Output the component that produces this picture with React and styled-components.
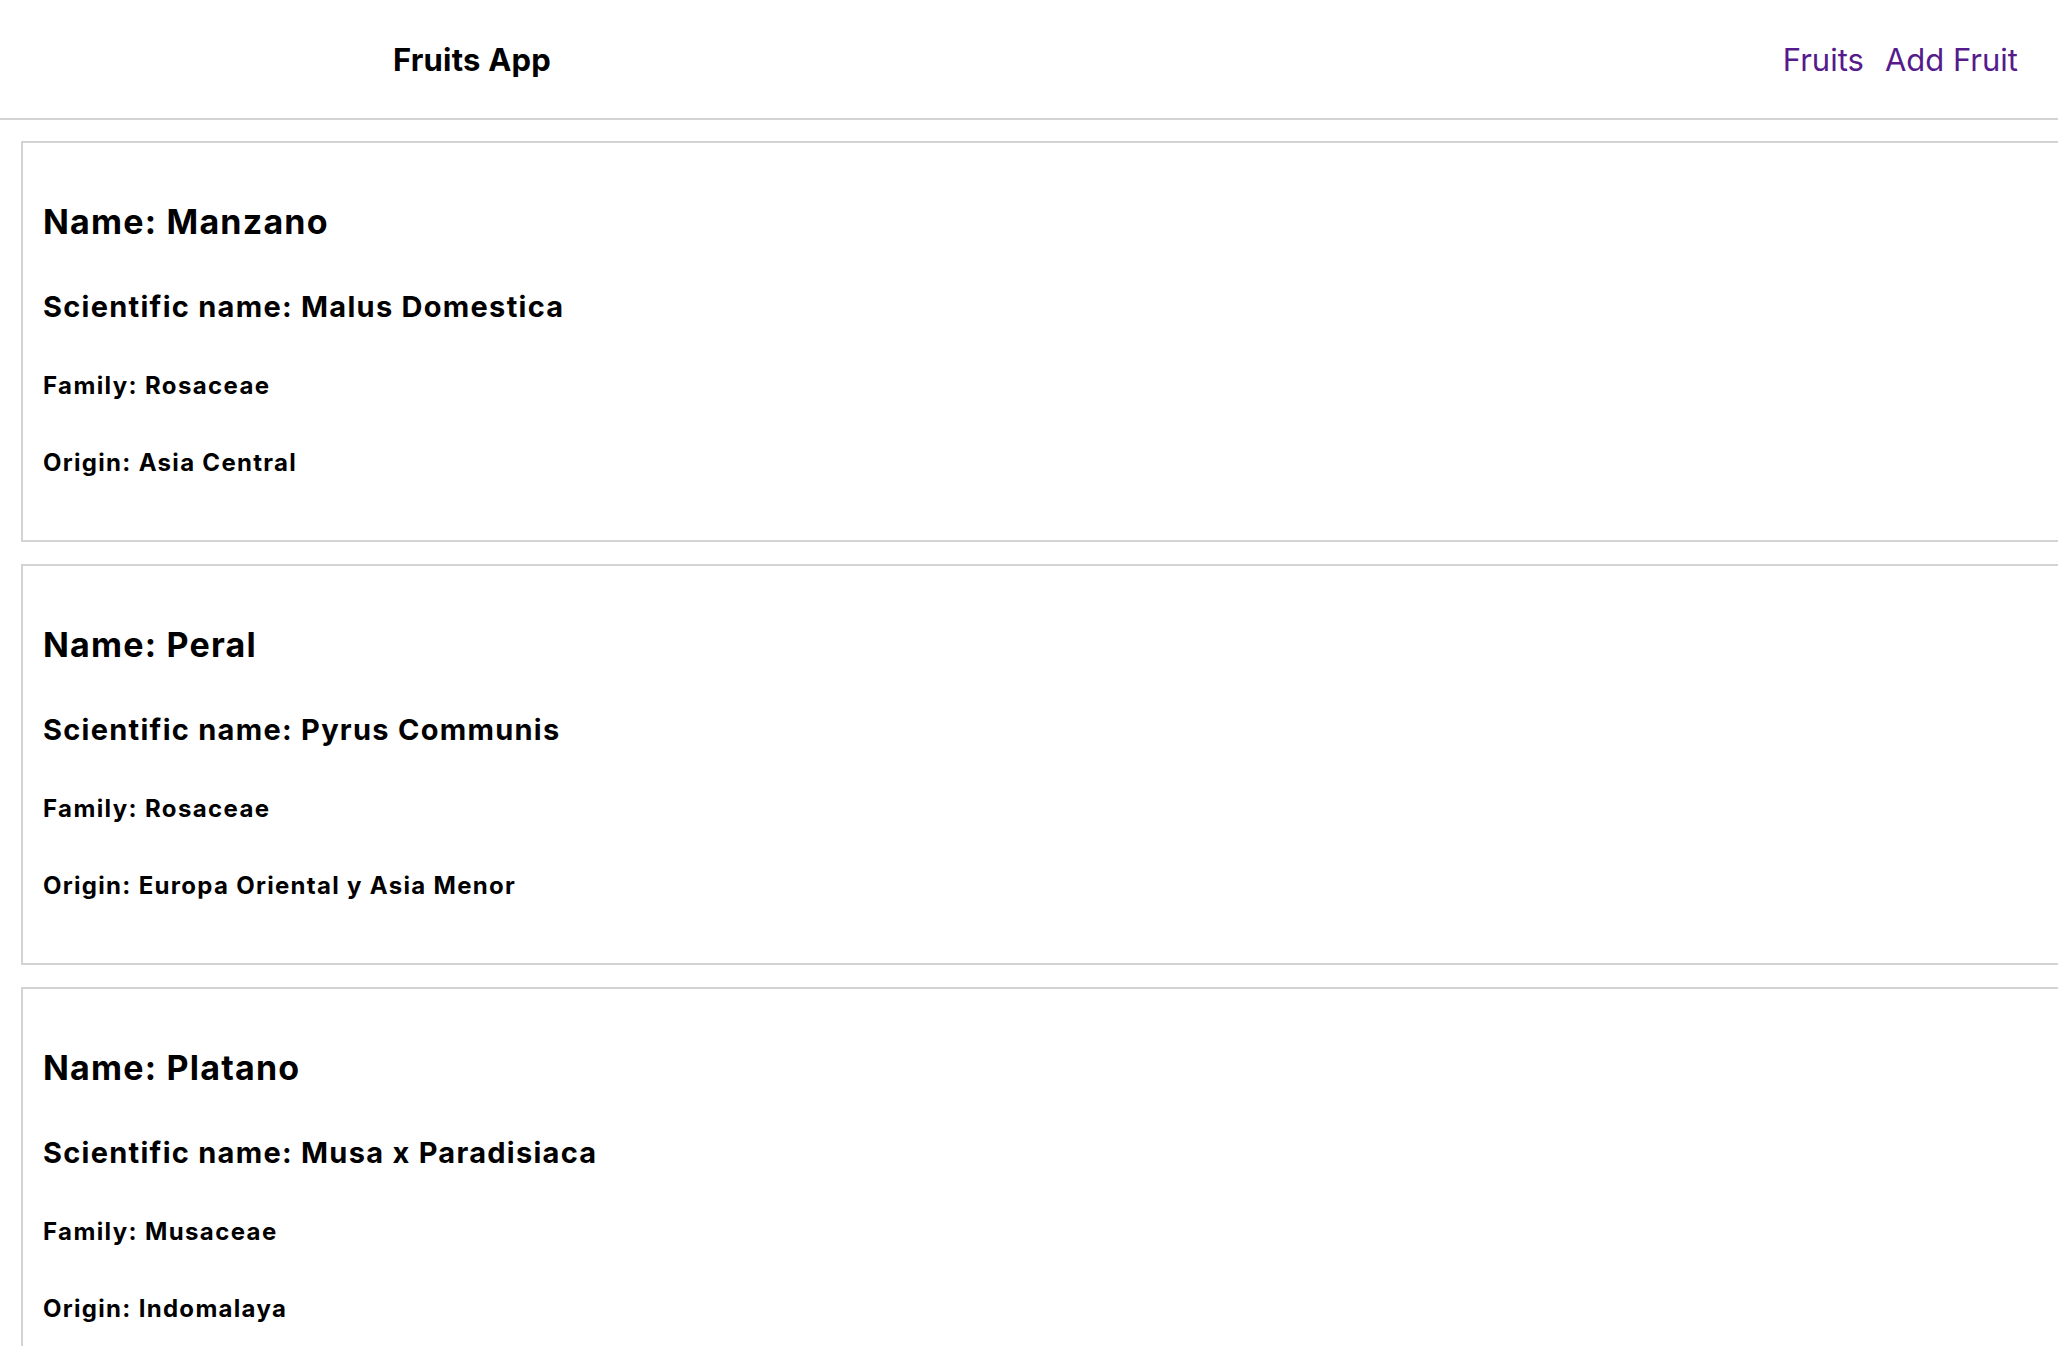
import React from "react";
import styled, { createGlobalStyle } from "styled-components";

const GlobalStyle = createGlobalStyle`
  * { margin: 0; padding: 0; box-sizing: border-box; }
  html, body { overflow: hidden; scrollbar-width: none; }
  body { background: #ffffff; font-family: Inter, "Noto Sans", sans-serif; color: #000; }
`;

const Header = styled.header`
  height: 120px;
  display: flex;
  align-items: center;
  justify-content: space-between;
  padding: 0 40px 0 393px;
  border-bottom: 2px solid #d3d3d3;
`;

const Brand = styled.h1`
  font-size: 31px;
  font-weight: 700;
  line-height: 1;
  letter-spacing: 0.2px;
`;

const Nav = styled.nav`
  display: flex;
  gap: 21px;
`;

const NavLink = styled.a`
  font-size: 31px;
  line-height: 1;
  color: #551a8b;
  text-decoration: none;
`;

const List = styled.main`
  display: flex;
  flex-direction: column;
  gap: 22px;
  padding: 21px 0 0 21px;
`;

const Card = styled.article`
  width: 100%;
  border: 2px solid #d3d3d3;
  border-right: none;
  padding: 62px 20px 65px;
  display: flex;
  flex-direction: column;
  gap: 53px;
`;

const Line = styled.p`
  font-size: ${(p) => p.$size}px;
  letter-spacing: ${(p) => p.$track}px;
  font-weight: 700;
  line-height: 1;
`;

const fruits = [
  { name: "Manzano", scientific: "Malus Domestica", family: "Rosaceae", origin: "Asia Central" },
  { name: "Peral", scientific: "Pyrus Communis", family: "Rosaceae", origin: "Europa Oriental y Asia Menor" },
  { name: "Platano", scientific: "Musa x Paradisiaca", family: "Musaceae", origin: "Indomalaya" },
];

export default function App() {
  return (
    <>
      <GlobalStyle />
      <Header>
        <Brand>Fruits App</Brand>
        <Nav>
          <NavLink href="#">Fruits</NavLink>
          <NavLink href="#">Add Fruit</NavLink>
        </Nav>
      </Header>
      <List>
        {fruits.map((f) => (
          <Card key={f.name}>
            <Line $size={34} $track={1.2}>Name: {f.name}</Line>
            <Line $size={29} $track={1.27}>Scientific name: {f.scientific}</Line>
            <Line $size={24} $track={1.38}>Family: {f.family}</Line>
            <Line $size={24} $track={1.3}>Origin: {f.origin}</Line>
          </Card>
        ))}
      </List>
    </>
  );
}
